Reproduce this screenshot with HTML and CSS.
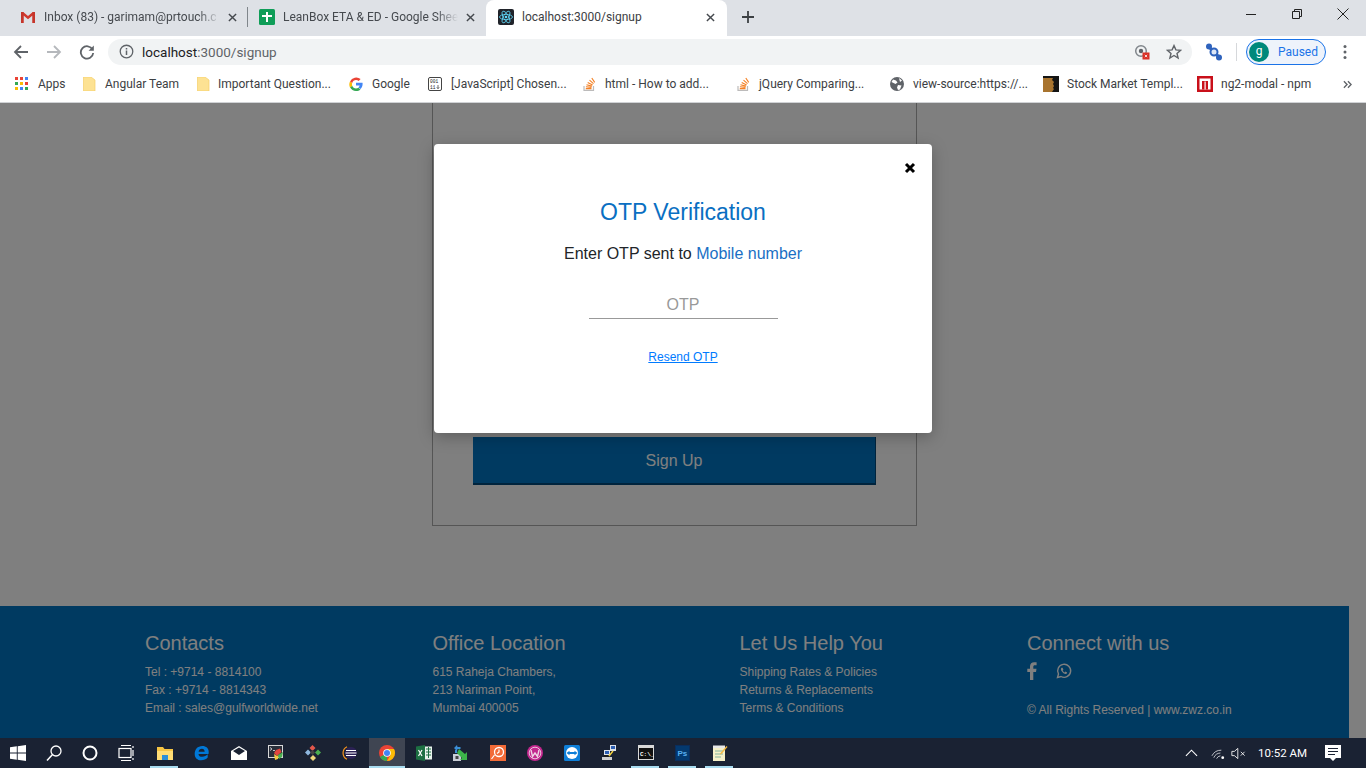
FILE: index.html
```html
<!DOCTYPE html>
<html lang="en">
<head>
<meta charset="utf-8">
<title>localhost:3000/signup</title>
<link rel="stylesheet" href="styles.css">
</head>
<body>
<div class="screen">
  <div class="tabbar">
    <div class="tab tab-first">
      <svg class="favicon" viewBox="0 0 16 16"><path d="M1 3h2.200L8 7l4.800-4H15v11h-2.500V6.600L8 10.200 3.500 6.600V14H1z" fill="#d0392e"/><path d="M1 3h2.500v11H1zM12.500 3H15v11h-2.500z" fill="#c5352b"/></svg>
      <span class="tab-title">Inbox (83) - garimam@prtouch.c</span>
      <svg class="tab-x" viewBox="0 0 10 10"><path d="M1 1l8 8M9 1l-8 8"/></svg>
    </div>
    <div class="tab-sep"></div>
    <div class="tab">
      <svg class="favicon" viewBox="0 0 16 16"><rect width="16" height="16" rx="1.500" fill="#0f9d58"/><path d="M7 3h2v3h4v2H9v5H7V8H3V6h4z" fill="#fff"/></svg>
      <span class="tab-title">LeanBox ETA &amp; ED - Google Shee</span>
      <svg class="tab-x" viewBox="0 0 10 10"><path d="M1 1l8 8M9 1l-8 8"/></svg>
    </div>
    <div class="tab tab-active">
      <svg class="favicon" viewBox="0 0 16 16"><rect width="16" height="16" rx="2" fill="#20232a"/><g fill="none" stroke="#61dafb" stroke-width=".8"><ellipse cx="8" cy="8" rx="6.500" ry="2.600"/><ellipse cx="8" cy="8" rx="6.500" ry="2.600" transform="rotate(60 8 8)"/><ellipse cx="8" cy="8" rx="6.500" ry="2.600" transform="rotate(120 8 8)"/></g><circle cx="8" cy="8" r="1.300" fill="#61dafb"/></svg>
      <span class="tab-title tab-title-full">localhost:3000/signup</span>
      <svg class="tab-x" viewBox="0 0 10 10"><path d="M1 1l8 8M9 1l-8 8"/></svg>
    </div>
    <svg class="new-tab" viewBox="0 0 12 12"><path d="M6 0v12M0 6h12"/></svg>
    <div class="win-controls">
      <svg class="win-btn" viewBox="0 0 12 12"><path d="M1 6.500h10"/></svg>
      <svg class="win-btn" viewBox="0 0 12 12"><path d="M1.500 3.500h7v7h-7zM3.500 3.500v-2h7v7h-2"/></svg>
      <svg class="win-btn" viewBox="0 0 12 12"><path d="M.5.500l11 11M11.500.500l-11 11"/></svg>
    </div>
  </div>

  <div class="toolbar">
    <svg class="nav" viewBox="0 0 16 16"><path d="M15 8H2M8 2L2 8l6 6" fill="none" stroke="#5f6368" stroke-width="1.800"/></svg>
    <svg class="nav" viewBox="0 0 16 16"><path d="M1 8h13M8 2l6 6-6 6" fill="none" stroke="#b5b8bc" stroke-width="1.800"/></svg>
    <svg class="nav nav-last" viewBox="0 0 16 16"><path d="M13.500 5.500A6.200 6.200 0 1 0 14.200 9" fill="none" stroke="#5f6368" stroke-width="1.800"/><path d="M14.800 1.500v5.200H9.600z" fill="#5f6368"/></svg>
    <div class="omnibox">
      <svg class="info" viewBox="0 0 16 16"><circle cx="8" cy="8" r="6.700" fill="none" stroke="#5f6368" stroke-width="1.400"/><path d="M7.200 7h1.600v4.800H7.200zM7.200 4.200h1.600v1.600H7.200z" fill="#5f6368"/></svg>
      <span class="url"><span class="url-host">localhost</span>:3000/signup</span>
      <svg class="omni-icon" viewBox="0 0 16 16"><circle cx="7" cy="7" r="5.300" fill="none" stroke="#80868b" stroke-width="1.500"/><circle cx="7" cy="7" r="2.200" fill="#5f6368"/><rect x="8.500" y="8.500" width="7" height="7" fill="#d93025"/><path d="M10.800 10.800l2.400 2.400M13.200 10.800l-2.400 2.400" stroke="#fff" stroke-width=".8"/></svg>
      <svg class="omni-icon" viewBox="0 0 16 16"><path d="M8 1.600l1.900 4.300 4.700.4-3.600 3.100 1.100 4.600L8 11.500 3.900 14 5 9.400 1.400 6.300l4.700-.4z" fill="none" stroke="#5f6368" stroke-width="1.400"/></svg>
    </div>
    <svg class="ext" viewBox="0 0 18 18"><path d="M4 4l10 10" stroke="#2f63bd" stroke-width="3"/><circle cx="4" cy="3.500" r="3" fill="#2f63bd"/><circle cx="14" cy="14.500" r="3" fill="#2f63bd"/><circle cx="9" cy="9" r="3.500" fill="#dce6f7" stroke="#2f63bd" stroke-width="2"/></svg>
    <div class="tool-sep"></div>
    <div class="profile"><span class="avatar">g</span><span class="paused">Paused</span></div>
    <svg class="kebab" viewBox="0 0 4 16"><circle cx="2" cy="2.500" r="1.500"/><circle cx="2" cy="8" r="1.500"/><circle cx="2" cy="13.500" r="1.500"/></svg>
  </div>

  <div class="bookmarks">
    <div class="bm">
      <svg class="bm-icon" viewBox="0 0 14 14"><g fill="#ea4335"><rect x="0" y="0" width="3" height="3"/><rect x="5" y="0" width="3" height="3"/></g><rect x="10" y="0" width="3" height="3" fill="#4285f4"/><rect x="0" y="5" width="3" height="3" fill="#34a853"/><rect x="5" y="5" width="3" height="3" fill="#fbbc05"/><rect x="10" y="5" width="3" height="3" fill="#ea4335"/><rect x="0" y="10" width="3" height="3" fill="#fbbc05"/><rect x="5" y="10" width="3" height="3" fill="#4285f4"/><rect x="10" y="10" width="3" height="3" fill="#34a853"/></svg>
      <span>Apps</span>
    </div>
    <div class="bm">
      <svg class="bm-icon" viewBox="0 0 14 14"><path d="M1.500 0h7.500l4 3v11H1.500z" fill="#fde293" stroke="#f5cf67" stroke-width=".7"/></svg>
      <span>Angular Team</span>
    </div>
    <div class="bm bm-tight">
      <svg class="bm-icon" viewBox="0 0 14 14"><path d="M1.500 0h7.500l4 3v11H1.500z" fill="#fde293" stroke="#f5cf67" stroke-width=".7"/></svg>
      <span>Important Question...</span>
    </div>
    <div class="bm">
      <svg class="bm-icon" viewBox="0 0 14 14"><path d="M13.600 7.100c0-.5 0-.9-.1-1.300H7v2.600h3.700c-.2.800-.6 1.500-1.300 2l2.100 1.600c1.300-1.100 2.100-2.800 2.100-4.900z" fill="#4285f4"/><path d="M7 14c1.800 0 3.300-.6 4.500-1.600L9.400 10.800c-.6.400-1.400.7-2.400.7-1.800 0-3.300-1.200-3.800-2.800L1 10.300C2.200 12.500 4.400 14 7 14z" fill="#34a853"/><path d="M3.200 8.700a4.200 4.200 0 0 1 0-2.700L1 4.400a7 7 0 0 0 0 6z" fill="#fbbc05"/><path d="M7 3c1 0 1.900.3 2.700 1l1.900-1.900A7 7 0 0 0 1 4.400L3.200 6C3.700 4.300 5.200 3 7 3z" fill="#ea4335"/></svg>
      <span>Google</span>
    </div>
    <div class="bm">
      <svg class="bm-icon" viewBox="0 0 14 14"><rect x=".5" y=".5" width="13" height="13" rx="1.500" fill="#fff" stroke="#444"/><text class="bits" x="2" y="6">001</text><text class="bits" x="2" y="11.500">11</text><path d="M10 8v3.500M8.800 10.300l1.200 1.400 1.200-1.400" fill="none" stroke="#333" stroke-width=".7"/></svg>
      <span>[JavaScript] Chosen...</span>
    </div>
    <div class="bm">
      <svg class="bm-icon" viewBox="0 0 14 14"><path d="M2 9v4.300h9.500V9" fill="none" stroke="#bcbbbb" stroke-width="1.200"/><path d="M3.800 11.600h5.700M3.900 9.800l5.600.6M4.500 7.700l5.400 1.400M5.700 5.400l4.900 2.500M7.500 3.200l4 3.400M9.800 1l2.900 4.400" stroke="#f48024" stroke-width="1.100"/></svg>
      <span>html - How to add...</span>
    </div>
    <div class="bm">
      <svg class="bm-icon" viewBox="0 0 14 14"><path d="M2 9v4.300h9.500V9" fill="none" stroke="#bcbbbb" stroke-width="1.200"/><path d="M3.800 11.600h5.700M3.900 9.800l5.600.6M4.500 7.700l5.400 1.400M5.700 5.400l4.900 2.500M7.500 3.200l4 3.400M9.800 1l2.900 4.400" stroke="#f48024" stroke-width="1.100"/></svg>
      <span>jQuery Comparing...</span>
    </div>
    <div class="bm">
      <svg class="bm-icon" viewBox="0 0 14 14"><circle cx="7" cy="7" r="7" fill="#5f6368"/><path d="M3 2.500l3 1 1.500 2-2 1.500-2-1-2-1zM8 8l3.500.5-1.500 4-2 .5-1-2.500zM9 1l3 2.500-2 1.500z" fill="#fff"/></svg>
      <span>view-source:https://...</span>
    </div>
    <div class="bm">
      <svg class="bm-icon bm-icon-wide" viewBox="0 0 16 16"><rect width="16" height="16" fill="#141414"/><path d="M0 2h10l-1 2 2 2-1 2 1 2-1 2 1 1-2 3H0z" fill="#a8742f"/></svg>
      <span>Stock Market Templ...</span>
    </div>
    <div class="bm">
      <svg class="bm-icon bm-icon-wide" viewBox="0 0 16 16"><rect width="16" height="16" fill="#c9101a"/><rect x="2.500" y="2.500" width="11" height="11" fill="#fff"/><rect x="5" y="5" width="6" height="8.500" fill="#c9101a"/><rect x="7.500" y="5.500" width="1.200" height="8" fill="#fff"/></svg>
      <span>ng2-modal - npm</span>
    </div>
    <svg class="bm-more" viewBox="0 0 10 10"><path d="M1 1.500L4.500 5 1 8.500M5.500 1.500L9 5 5.500 8.500"/></svg>
  </div>

  <div class="viewport">
    <div class="page">
      <main class="page-main">
        <div class="card">
          <button class="signup-btn" type="button">Sign Up</button>
        </div>
      </main>
      <footer class="footer">
        <div class="foot-col">
          <h4>Contacts</h4>
          <p>Tel : +9714 - 8814100</p>
          <p>Fax : +9714 - 8814343</p>
          <p>Email : sales@gulfworldwide.net</p>
        </div>
        <div class="foot-col">
          <h4>Office Location</h4>
          <p>615 Raheja Chambers,</p>
          <p>213 Nariman Point,</p>
          <p>Mumbai 400005</p>
        </div>
        <div class="foot-col">
          <h4>Let Us Help You</h4>
          <p>Shipping Rates &amp; Policies</p>
          <p>Returns &amp; Replacements</p>
          <p>Terms &amp; Conditions</p>
        </div>
        <div class="foot-col">
          <h4>Connect with us</h4>
          <div class="social">
            <svg class="fb" viewBox="0 0 10 18"><path d="M3 18V10H.3V6.800H3V4.500C3 1.700 4.700.200 7.100.200c1.200 0 2.200.100 2.500.100v2.900H7.900c-1.300 0-1.600.600-1.600 1.500v2.100h3.200L9 10H6.300v8z"/></svg>
            <svg class="wa" viewBox="0 0 16 16"><path d="M1.500 14.500l1-3.500a6.500 6.500 0 1 1 2.500 2.500z" fill="none" stroke="#fff" stroke-width="1.400"/><path d="M5.500 4.800c-.9.800-.8 2 .2 3.400 1.100 1.600 2.700 2.800 4.100 2.700.9-.1 1.300-.7 1.300-1.400L9.500 8.600l-.8.800c-.9-.4-1.600-1.100-2-2l.7-.8-.8-1.800z" fill="#fff"/></svg>
          </div>
          <p class="copy">© All Rights Reserved | www.zwz.co.in</p>
        </div>
      </footer>
    </div>
    <div class="overlay">
      <div class="modal">
        <svg class="modal-close" viewBox="0 0 12 12"><path d="M2 2l8 8M10 2l-8 8"/></svg>
        <h2 class="modal-title">OTP Verification</h2>
        <p class="modal-sub">Enter OTP sent to <span class="modal-mobile">Mobile number</span></p>
        <input class="otp" type="text" placeholder="OTP">
        <a class="resend" href="#">Resend OTP</a>
      </div>
    </div>
  </div>

  <div class="taskbar">
    <div class="task"><svg class="ti" viewBox="0 0 16 16"><path d="M0 2.300l6.800-1v6.300H0zM7.700 1.200L16 0v7.600H7.700zM0 8.400h6.800v6.300l-6.800-1zM7.700 8.400H16V16l-8.300-1.200z" fill="#fff"/></svg></div>
    <div class="task task-sys"><svg class="ti" viewBox="0 0 16 16"><circle cx="10" cy="6" r="5" fill="none" stroke="#fff" stroke-width="1.300"/><path d="M6.300 9.700L1 15.500" stroke="#fff" stroke-width="1.500"/></svg></div>
    <div class="task task-sys"><svg class="ti" viewBox="0 0 16 16"><circle cx="8" cy="8" r="6.500" fill="none" stroke="#fff" stroke-width="2"/></svg></div>
    <div class="task task-view"><svg class="ti" viewBox="0 0 16 16"><path d="M3 0.500h10M3 15.500h10" stroke="#fff" stroke-width="1.200"/><rect x="1" y="3.500" width="12" height="9" fill="none" stroke="#fff" stroke-width="1.200"/><path d="M15 1v2M15 5v6M15 13v2" stroke="#fff" stroke-width="1.200"/></svg></div>
    <div class="task task-open"><svg class="ti" viewBox="0 0 16 16"><path d="M0 2h6l1.500 2H16v11H0z" fill="#f6c544"/><path d="M0 6h16v9H0z" fill="#ffdd75"/><path d="M5 10h6v5H5z" fill="#2c8fd8"/></svg></div>
    <div class="task"><svg class="ti" viewBox="0 0 16 16"><path d="M8.300 1C3.500 1 .7 4.600.7 9c0 4 2.800 6.300 6.400 6.300 2.900 0 5-1 6.600-2.700v-3.300c-1.500 1.500-3.300 2.500-5.500 2.500-2.200 0-3.600-1-3.700-2.900h10c.2-.7.200-1.300.2-2C14.700 3.300 12.200 1 8.300 1zM4.600 6.700c.2-1.700 1.500-2.900 3.300-2.900 1.700 0 2.700 1.200 2.800 2.900z" fill="#0078d7"/></svg></div>
    <div class="task"><svg class="ti" viewBox="0 0 16 16"><path d="M0 6l8-5 8 5v9H0z" fill="#fff"/><path d="M2 6l6-3.500L14 6l-6 4z" fill="#1a2233"/></svg></div>
    <div class="task"><svg class="ti" viewBox="0 0 16 16"><rect x=".5" y=".5" width="14" height="12" fill="#2a2f3a" stroke="#d8d8d8"/><path d="M2 2.500l2 1.500-2 1.500M5 5.500h2" stroke="#fff" stroke-width=".7" fill="none"/><path d="M8 5l4-1.500 1.500 3.500L9 11 6 8z" fill="#e2463e"/><path d="M6 9l3 2 2-1-1 4-3 1z" fill="#f3c93f"/><path d="M10 10l5-3-1 5-3 2z" fill="#4caf50"/></svg></div>
    <div class="task"><svg class="ti" viewBox="0 0 16 16"><path d="M7.500 0l3 3-3 3-3-3z" fill="#e2574c"/><path d="M3 4.500l3 3-3 3-3-3z" fill="#8fb8e0"/><path d="M13 4.500l3 3-3 3-3-3z" fill="#4caf50"/><path d="M8 10l3 3-3 3-3-3z" fill="#f0d67a"/><path d="M7.500 5l2.500 2.500L7.500 10 5 7.500z" fill="#444"/></svg></div>
    <div class="task"><svg class="ti" viewBox="0 0 16 16"><circle cx="9" cy="8" r="6" fill="#2c2255"/><path d="M4 5.500h10M3.500 8h11M4 10.500h10" stroke="#fff" stroke-width="1.100"/><path d="M5 1.700A7 7 0 0 0 5 14.300" fill="none" stroke="#f7941e" stroke-width="1.200"/></svg></div>
    <div class="task task-active"><svg class="ti" viewBox="0 0 16 16"><circle cx="8" cy="8" r="8" fill="#ea4335"/><path d="M8 16a8 8 0 0 1-7-4l3.500-2L8 12z" fill="#34a853"/><path d="M16 8a8 8 0 0 1-8 8l3.500-6L8 4h7a8 8 0 0 1 1 4z" fill="#fbbc05"/><circle cx="8" cy="8" r="3.800" fill="#fff"/><circle cx="8" cy="8" r="3" fill="#4285f4"/></svg></div>
    <div class="task"><svg class="ti" viewBox="0 0 16 16"><rect x="7" y="1.500" width="9" height="13" fill="#e8f3ec"/><path d="M10 4h5M10 7h5M10 10h5M12.500 2v11" stroke="#1d6f42"/><path d="M0 1.500l9-1.500v16l-9-1.500z" fill="#1d6f42"/><path d="M2.500 5l3.500 6M6 5l-3.500 6" stroke="#fff" stroke-width="1.200"/></svg></div>
    <div class="task"><svg class="ti" viewBox="0 0 16 16"><path d="M1 3l3-3 .5 2h3v2h-3l-.5 2z" fill="#3b8fd8"/><path d="M2 5l2 0v3H2z" fill="#3b8fd8"/><rect x="0" y="9" width="8" height="7" fill="#c9ced6"/><rect x="2.500" y="11" width="3" height="3" fill="#444"/><path d="M6 4l6 5 2-2v8H7l2-2-5-5z" fill="#3cb54a"/></svg></div>
    <div class="task"><svg class="ti" viewBox="0 0 16 16"><rect width="16" height="16" fill="#f26b38"/><circle cx="9" cy="7" r="4.500" fill="none" stroke="#fff" stroke-width="1.300"/><path d="M9 4.500V7l-2 1.500M1.500 14l3-4" stroke="#fff" stroke-width="1.200" fill="none"/></svg></div>
    <div class="task"><svg class="ti" viewBox="0 0 16 16"><circle cx="8" cy="8" r="8" fill="#c2278e"/><path d="M4 5l1.500 6.500L8 8l2.500 3.500L12 5" fill="none" stroke="#efd3e5" stroke-width="1.400"/><circle cx="8" cy="8" r="5.800" fill="none" stroke="#efd3e5" stroke-width=".9"/></svg></div>
    <div class="task"><svg class="ti" viewBox="0 0 16 16"><rect width="16" height="16" rx="1.500" fill="#0e7fd8"/><circle cx="8" cy="8" r="6" fill="#fff"/><path d="M2.500 8l3-2.300V7h5V5.700l3 2.300-3 2.300V9h-5v1.300z" fill="#0e7fd8"/></svg></div>
    <div class="task"><svg class="ti" viewBox="0 0 16 16"><rect x="9" y="0" width="6" height="6" fill="#dfe3ea"/><rect x="10" y="1" width="4" height="3" fill="#2d5fb3"/><rect x="3" y="5" width="6" height="5" fill="#dfe3ea"/><rect x="4" y="6" width="4" height="3" fill="#2d5fb3"/><path d="M1 12h10v3H1z" fill="#cfcfcf"/><path d="M3 10h5v2H3z" fill="#1c1c1c"/><path d="M12 6l-4 5" stroke="#f5d33f" stroke-width="1.500"/></svg></div>
    <div class="task task-open"><svg class="ti" viewBox="0 0 16 16"><rect width="16" height="15" fill="#d8d8d8"/><rect x="1" y="3" width="14" height="11" fill="#111"/><text class="cmd-text" x="2" y="11">C:\_</text></svg></div>
    <div class="task task-open"><svg class="ti" viewBox="0 0 16 16"><rect width="15" height="16" fill="#0a2d5c"/><rect x="1" y="1" width="13" height="14" fill="#03396f"/><text class="ps-text" x="2.500" y="11">Ps</text></svg></div>
    <div class="task task-open"><svg class="ti" viewBox="0 0 16 16"><rect x="1" y="2" width="12" height="14" fill="#f5f0c8"/><path d="M3 6h8M3 9h8M3 12h6" stroke="#7a9" stroke-width=".9"/><path d="M1 0.500h12v2.500H1z" fill="#e8e8e8"/><path d="M14.500 1l1 1-6 7-1.500.5.500-1.500z" fill="#f4b73f"/></svg></div>
    <div class="tray">
      <svg class="tray-chev" viewBox="0 0 14 8"><path d="M1 7l6-6 6 6"/></svg>
      <svg class="tray-wifi" viewBox="0 0 16 14"><path d="M1 10a11 11 0 0 1 10-6M3 12a8 8 0 0 1 7-5M6 13a5 5 0 0 1 4-3" fill="none" stroke="#c6c9cf" stroke-width="1"/><circle cx="12.500" cy="12" r="1.500" fill="#fff"/></svg>
      <svg class="tray-vol" viewBox="0 0 20 14"><path d="M1 4.500h3l4-3.500v12l-4-3.500H1z" fill="none" stroke="#fff"/><path d="M11.500 5l4.500 4.500M16 5l-4.500 4.500" stroke="#fff"/></svg>
      <span class="clock">10:52 AM</span>
      <svg class="tray-notif" viewBox="0 0 16 16"><path d="M0 0h16v13h-5l-3 3-3-3H0z" fill="#fff"/><path d="M3 3.500h10M3 6.500h10M3 9.500h7" stroke="#1a2233"/></svg>
    </div>
  </div>
</div>
</body>
</html>
```

FILE: styles.css
```css
* { box-sizing: border-box; }
html, body { margin: 0; padding: 0; height: 100%; overflow: hidden; }
body { font-family: "Liberation Sans", Arial, sans-serif; }

.screen { width: 1366px; height: 768px; display: flex; flex-direction: column; background: #fff; }

/* tab strip */
.tabbar { height: 36px; flex: none; background: #dee1e6; display: flex; align-items: stretch; padding-left: 8px; }
.tab { width: 238px; padding: 0 7px 2px 12px; display: flex; align-items: center; gap: 8px; font: 12px Roboto, "Open Sans", sans-serif; color: #45494e; }
.tab-first { padding-right: 5px; }
.tab-sep + .tab { padding-right: 6px; }
.tab-active { width: 241px; margin-left: 1px; padding-right: 8px; background: #fff; color: #3c4043; border-radius: 8px 8px 0 0; }
.tab-sep { width: 1px; height: 20px; margin: 7px -1px 0 1px; background: #80868b; }
.favicon { width: 16px; height: 16px; flex: none; }
.tab-title { flex: 1; min-width: 0; white-space: nowrap; -webkit-mask-image: linear-gradient(90deg, #000 calc(100% - 22px), transparent); mask-image: linear-gradient(90deg, #000 calc(100% - 22px), transparent); }
.tab-title-full { -webkit-mask-image: none; mask-image: none; }
.tab-x { width: 9px; height: 9px; flex: none; margin-right: 4px; fill: none; stroke: #45494e; stroke-width: 1.600; }
.new-tab { width: 12px; height: 12px; margin: 11px 0 0 15px; fill: none; stroke: #3c4043; stroke-width: 1.800; }
.win-controls { margin-left: auto; display: flex; gap: 34px; padding: 8px 17px 0 0; height: 30px; }
.win-btn { width: 12px; height: 12px; fill: none; stroke: #222; stroke-width: 1; }

/* toolbar */
.toolbar { height: 31px; flex: none; background: #fff; display: flex; align-items: center; padding-left: 13px; }
.nav { width: 16px; height: 16px; flex: none; margin-right: 17px; }
.nav-last { margin-right: 13px; }
.omnibox { width: 1084px; height: 26px; background: #f1f3f4; border-radius: 13px; display: flex; align-items: center; padding: 0 10px 0 11px; flex: none; }
.info { width: 15px; height: 15px; flex: none; margin-right: 8px; }
.url { flex: 1; font: 13.500px Roboto, "Open Sans", sans-serif; color: #5f6368; }
.url-host { color: #202124; }
.omni-icon { width: 16px; height: 16px; flex: none; margin-left: 16px; }
.ext { width: 18px; height: 18px; margin-left: 13px; flex: none; }
.tool-sep { width: 1px; height: 18px; margin-left: 13px; background: #d6d8db; flex: none; }
.profile { width: 80px; height: 26px; margin-left: 9px; border: 1.500px solid #1a73e8; border-radius: 13px; background: #eef3fb; display: flex; align-items: center; padding-left: 2px; flex: none; }
.avatar { width: 20px; height: 20px; border-radius: 50%; background: #00897b; color: #fff; font: 12px/18px Roboto, sans-serif; text-align: center; }
.paused { margin-left: 9px; font: 12px Roboto, "Open Sans", sans-serif; color: #1a73e8; }
.kebab { width: 4px; height: 16px; margin-left: 17px; fill: #5f6368; flex: none; }

/* bookmarks */
.bookmarks { height: 36px; flex: none; background: #fff; display: grid; grid-template-columns: 67px 114px 153px 79px 154px 154px 154px 153px 154px 146px 12px; align-items: center; padding: 0 0 1px 15px; border-bottom: 1px solid #d0d2d5; font: 12px Roboto, "Open Sans", sans-serif; color: #3c4043; }
.bm { display: flex; align-items: center; gap: 9px; white-space: nowrap; overflow: hidden; }
.bm-tight { gap: 8px; }
.bm-icon { width: 14px; height: 14px; flex: none; }
.bm-icon-wide { width: 16px; height: 16px; margin-right: -1px; }
.bm-more { width: 9px; height: 9px; fill: none; stroke: #5f6368; stroke-width: 1.500; }
.bits { font: 4.500px "Liberation Mono", monospace; fill: #222; }

/* page */
.viewport { position: relative; flex: 1; min-height: 0; overflow: hidden; }
.page { height: 100%; width: 100%; display: flex; flex-direction: column; background: #fff; }
.page-main { flex: 1; min-height: 0; display: flex; justify-content: center; align-items: flex-end; padding: 0 17px 80px 0; overflow: hidden; }
.card { width: 485px; height: 460px; flex: none; border: 1px solid #aaa; padding: 0 40px 40px; display: flex; flex-direction: column; justify-content: flex-end; }
.signup-btn { width: 403px; height: 48px; background: #0074c2; color: #fff; border: 0; border-bottom: 2px solid #00497a; border-right: 1px solid #00497a; font: 16px "Liberation Sans", Arial, sans-serif; padding: 2px 0 0; }

.footer { height: 132px; width: 1349px; flex: none; background: #0074c2; color: #fff; display: grid; grid-template-columns: 287.5px 307px 287.5px 1fr; padding: 26px 0 0 145px; }
.foot-col h4 { margin: 0 0 8px; font-weight: 400; font-size: 20px; line-height: 23px; }
.foot-col p { margin: 0; font-size: 12px; line-height: 18px; }
.social { display: flex; align-items: center; gap: 19px; height: 18px; margin-top: -1px; }
.fb { width: 10px; height: 18px; fill: #fff; }
.wa { width: 16px; height: 16px; }
.foot-col .copy { margin-top: 21px; }

/* overlay + modal */
.overlay { position: absolute; inset: 0; background: rgba(0, 0, 0, .5); display: flex; justify-content: center; align-items: flex-start; padding-top: 41px; }
.modal { position: relative; width: 498px; height: 289px; background: #fff; border-radius: 4px; box-shadow: 0 4px 16px rgba(0, 0, 0, .25); display: flex; flex-direction: column; align-items: center; padding-top: 54px; }
.modal-close { position: absolute; top: 18px; right: 16px; width: 12px; height: 12px; fill: none; stroke: #000; stroke-width: 3; }
.modal-title { margin: 0; font-weight: 400; font-size: 23px; line-height: 28px; color: #0a6fc2; }
.modal-sub { margin: 19px 0 0; font-size: 16px; line-height: 18px; color: #212529; }
.modal-mobile { color: #1a6fc4; }
.otp { width: 189px; height: 28px; margin-top: 28px; border: 0; border-bottom: 1px solid #999; outline: 0; background: transparent; text-align: center; font: 16px "Liberation Sans", Arial, sans-serif; padding: 0; }
.otp::placeholder { color: #999; opacity: 1; }
.resend { margin-top: 31px; font-size: 12px; line-height: 14px; color: #007bff; text-decoration: underline; }

/* taskbar */
.taskbar { height: 30px; flex: none; background: #1a2233; display: flex; align-items: stretch; color: #fff; }
.task { width: 37px; flex: none; display: flex; align-items: center; justify-content: center; position: relative; }
.task:first-child, .task-sys { width: 36px; }
.task-view { width: 35px; margin-right: 3px; }
.task-open::after, .task-active::after { content: ""; position: absolute; left: 4px; right: 5px; bottom: 0; height: 2px; background: #a8dcf0; }
.task-active { width: 36px; margin-left: 1px; background: #3f4552; }
.task-active::after { left: 0; right: 0; }
.ti { width: 16px; height: 16px; }
.cmd-text { font: 700 6px "Liberation Mono", monospace; fill: #fff; }
.ps-text { font: 700 8px "Liberation Sans", sans-serif; fill: #58b0f0; }
.tray { margin-left: auto; display: flex; align-items: center; padding-right: 25px; }
.tray-chev { width: 13px; height: 8px; fill: none; stroke: #fff; stroke-width: 1.200; }
.tray-wifi { width: 15px; height: 14px; margin-left: 13px; }
.tray-vol { width: 17px; height: 13px; margin-left: 5px; }
.clock { margin-left: 10px; font: 11.500px Roboto, "Open Sans", sans-serif; color: #fff; }
.tray-notif { width: 16px; height: 16px; margin-left: 18px; }
```
